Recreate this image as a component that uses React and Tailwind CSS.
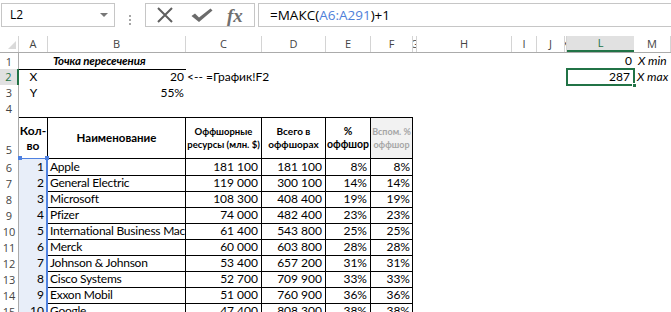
import clsx from 'clsx';

const GRID =
    'grid grid-cols-[19px_29px_138px_76px_64px_45px_42px_4px_95px_25px_28px_2px_67px_1fr]';

const CELL_FONT = "font-['Lato',sans-serif] text-[12px] leading-4 text-black";

const rows = [
    [1, 'Apple', '181 100', '181 100', '8%', '8%'],
    [2, 'General Electric', '119 000', '300 100', '14%', '14%'],
    [3, 'Microsoft', '108 300', '408 400', '19%', '19%'],
    [4, 'Pfizer', '74 000', '482 400', '23%', '23%'],
    [5, 'International Business Machines', '61 400', '543 800', '25%', '25%'],
    [6, 'Merck', '60 000', '603 800', '28%', '28%'],
    [7, 'Johnson & Johnson', '53 400', '657 200', '31%', '31%'],
    [8, 'Cisco Systems', '52 700', '709 900', '33%', '33%'],
    [9, 'Exxon Mobil', '51 000', '760 900', '36%', '36%'],
    [10, 'Google', '47 400', '808 300', '38%', '38%'],
];

const letters = ['A', 'B', 'C', 'D', 'E', 'F', 'G', 'H', 'I', 'J', 'K', 'L', 'M'];

function RowNum({ n, active, tall }) {
    return (
        <div
            className={clsx(
                "flex justify-center font-['Open_Sans',sans-serif] text-[11px] leading-4",
                tall ? 'items-end pb-[1px]' : 'items-center',
                active
                    ? 'border-r-2 border-[#217346] bg-[#e1e1e1] text-[#217346]'
                    : 'border-r border-[#ababab] text-[#444]'
            )}
        >
            {n}
        </div>
    );
}

function FormulaBar() {
    return (
        <div className="flex h-9 pt-[3px] font-['Open_Sans',sans-serif]">
            <div className="ml-[1px] flex h-6 w-[114px] items-center justify-between border border-[#c6c6c6] pl-2 pr-[6px] text-[12px] text-black">
                <span>L2</span>
                <svg width="8" height="5" viewBox="0 0 8 5">
                    <polygon points="0,0 8,0 4,4" fill="#777" />
                </svg>
            </div>
            <div className="flex w-[30px] flex-col items-center justify-center gap-[2px]">
                <span className="h-[2px] w-[2px] bg-[#a6a6a6]" />
                <span className="h-[2px] w-[2px] bg-[#a6a6a6]" />
                <span className="h-[2px] w-[2px] bg-[#a6a6a6]" />
            </div>
            <div className="flex h-6 w-[110px] items-center border border-[#c6c6c6]">
                <svg className="ml-[10px]" width="18" height="16" viewBox="0 0 18 16">
                    <path d="M2 1 L16 15 M16 1 L2 15" stroke="#5f5f5f" strokeWidth="2" fill="none" />
                </svg>
                <svg className="ml-[17px]" width="22" height="15" viewBox="0 0 22 15">
                    <path d="M0.5 8 L4 5.5 L8 9.5 L19.5 0.5 L21.5 2.5 L8 14 Z" fill="#6b6b6b" />
                </svg>
                <span className="ml-[14px] font-['Liberation_Serif',serif] text-[19px] font-bold italic leading-none text-[#707070]">
                    fx
                </span>
            </div>
            <div className="ml-[3px] flex h-6 flex-1 items-center border-y border-l border-[#c6c6c6] pl-[11px] text-[13.5px] text-black">
                =МАКС(<span className="text-[#4f7fd9]">A6:A291</span>)+1
            </div>
        </div>
    );
}

function ColumnHeader() {
    return (
        <div className={clsx(GRID, 'h-[17px] border-b border-[#ababab]')}>
            <div className="relative border-r border-[#d4d4d4]">
                <svg className="absolute bottom-[3px] right-[2px]" width="8" height="8" viewBox="0 0 8 8">
                    <polygon points="8,0 8,8 0,8" fill="#dadada" />
                </svg>
            </div>
            {letters.map((l) => (
                <div
                    key={l}
                    className={clsx(
                        "flex items-center justify-center overflow-hidden font-['Open_Sans',sans-serif] text-[11px] leading-4",
                        l === 'L'
                            ? 'border-b-2 border-[#217346] bg-[#e1e1e1] text-[#217346]'
                            : 'border-r border-[#d4d4d4] text-[#444]'
                    )}
                >
                    {l}
                </div>
            ))}
        </div>
    );
}

export default function App() {
    return (
        <div className="h-[312px] w-[671px] overflow-hidden bg-white">
            <FormulaBar />
            <ColumnHeader />

            <div className={clsx(GRID, CELL_FONT, 'h-4')}>
                <RowNum n={1} />
                <div className="border-b border-black" />
                <div className="border-b border-black pl-[5px] text-[11.5px] font-bold italic tracking-[-0.15px]">
                    Точка пересечения
                </div>
                <div className="col-span-9" />
                <div className="pr-[2px] text-right">0</div>
                <div className="pl-[4px] italic">X min</div>
            </div>

            <div className={clsx(GRID, CELL_FONT, 'h-4')}>
                <RowNum n={2} active />
                <div className="text-center">X</div>
                <div className="pr-[2px] text-right">20</div>
                <div className="col-span-9 whitespace-nowrap pl-[1px]">{'<-- =График!F2'}</div>
                <div className="relative pr-[4px] text-right">
                    287
                    <div className="absolute -inset-x-[1px] -inset-y-[1px] border-2 border-[#217346]" />
                    <div className="absolute -bottom-[3px] -right-[3px] h-[5px] w-[5px] border border-white bg-[#217346]" />
                </div>
                <div className="pl-[3px] italic">X max</div>
            </div>

            <div className={clsx(GRID, CELL_FONT, 'h-4')}>
                <RowNum n={3} />
                <div className="text-center">Y</div>
                <div className="pr-[2px] text-right">55%</div>
                <div className="col-span-11" />
            </div>

            <div className={clsx(GRID, CELL_FONT, 'h-4')}>
                <RowNum n={4} />
                <div className="col-span-13" />
            </div>

            <div className={clsx(GRID, CELL_FONT, 'h-[42px]')}>
                <RowNum n={5} tall />
                <div className="flex items-center justify-center border-y border-r border-black border-b-[#4f81e0] text-center font-bold leading-[15px]">
                    Кол-
                    <br />
                    во
                </div>
                <div className="flex items-center justify-center border-y border-r border-black text-[11.5px] font-bold">
                    Наименование
                </div>
                <div className="flex items-center justify-center border-y border-r border-black text-center text-[9.5px] font-bold leading-[13px]">
                    Оффшорные
                    <br />
                    ресурсы (млн. $)
                </div>
                <div className="flex items-center justify-center border-y border-r border-black text-center text-[10px] font-bold leading-[13px]">
                    Всего в
                    <br />
                    оффшорах
                </div>
                <div className="flex items-center justify-center border-y border-r border-black text-center text-[10.5px] font-bold leading-[13px]">
                    %
                    <br />
                    оффшор
                </div>
                <div className="flex items-center justify-center border-y border-r border-black bg-[#f2f2f2] text-center text-[9px] font-bold leading-[13px] text-[#a6a6a6]">
                    Вспом. %
                    <br />
                    оффшор
                </div>
                <div className="col-span-7" />
            </div>

            {rows.map((r, i) => (
                <div key={r[0]} className={clsx(GRID, CELL_FONT, 'h-4')}>
                    <RowNum n={i + 6} />
                    <div className="relative border-b border-r-2 border-b-black border-r-[#4f81e0] bg-[#e8eef9] pr-[2px] text-right">
                        {r[0]}
                        {i === 0 && (
                            <>
                                <div className="absolute -left-[1px] -top-[3px] h-[4px] w-[4px] bg-[#4f81e0]" />
                                <div className="absolute -right-[3px] -top-[3px] h-[4px] w-[4px] bg-[#4f81e0]" />
                            </>
                        )}
                    </div>
                    <div className="overflow-hidden whitespace-nowrap border-b border-r border-black pl-[2px] tracking-[-0.25px]">
                        {r[1]}
                    </div>
                    <div className="border-b border-r border-black pr-[3px] text-right">{r[2]}</div>
                    <div className="border-b border-r border-black pr-[3px] text-right">{r[3]}</div>
                    <div className="border-b border-r border-black pr-[3px] text-right">{r[4]}</div>
                    <div className="border-b border-r border-black pr-[2px] text-right">{r[5]}</div>
                    <div className="col-span-7" />
                </div>
            ))}
        </div>
    );
}
